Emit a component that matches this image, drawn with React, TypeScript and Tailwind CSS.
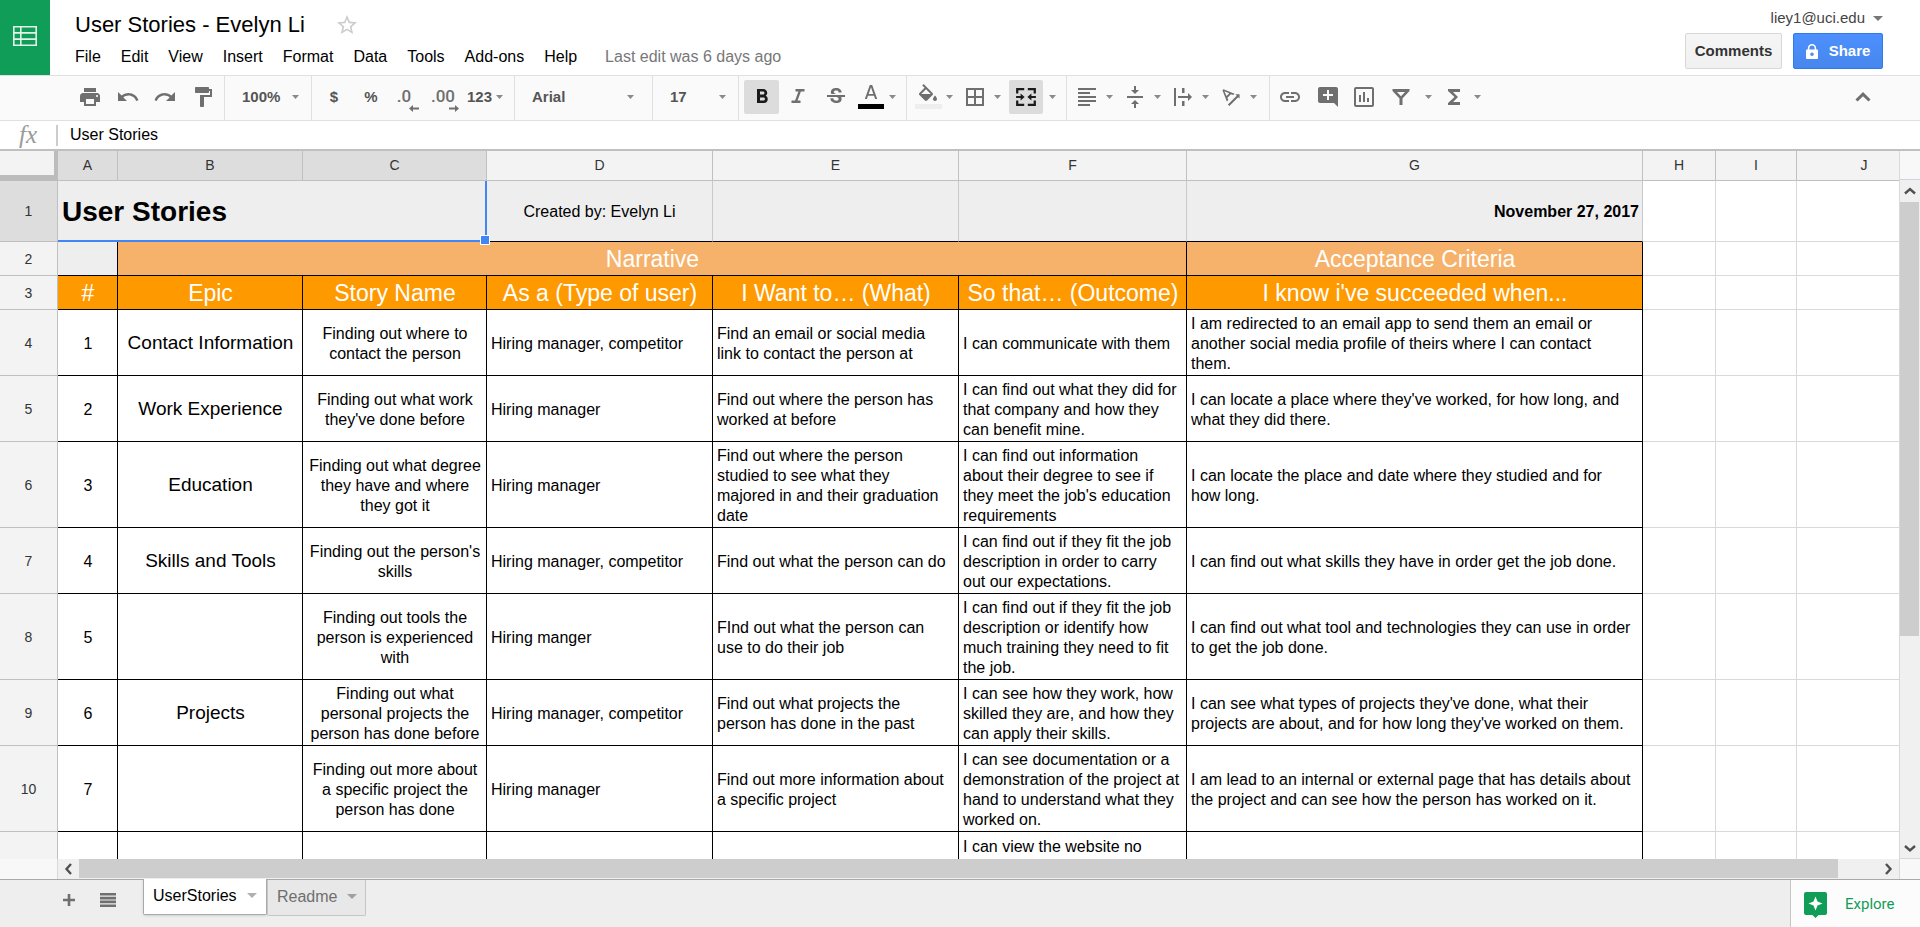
import { ReactNode } from 'react';

type Cell = { t?: string; span?: number; c?: string };
type Row = { n: string; h: string; cells: Cell[] };

const COLS: { id: string; w: string; on?: boolean }[] = [
  { id: 'A', w: 'w-[60px]', on: true },
  { id: 'B', w: 'w-[185px]', on: true },
  { id: 'C', w: 'w-[184px]', on: true },
  { id: 'D', w: 'w-[226px]' },
  { id: 'E', w: 'w-[246px]' },
  { id: 'F', w: 'w-[228px]' },
  { id: 'G', w: 'w-[456px]' },
  { id: 'H', w: 'w-[73px]' },
  { id: 'I', w: 'w-[81px]' },
  { id: 'J', w: 'w-[135px]' },
];

const EMPTY = 'border-[#d9d9d9]';
const HEAD = 'border-black bg-[#ff9900] text-white text-[23px] text-center';
const BAND = 'border-black bg-[#f6b26b] text-white text-[23px] text-center';
const GRAY = 'bg-[#eeeeee] border-r-[#c9c9c9] border-b-black';
const MID = 'border-black pt-0.5 text-center';
const EPIC = 'border-black text-center text-[19px]';
const LEFT = 'border-black pt-0.5 text-left';

const blank = (): Cell[] => [{ c: EMPTY }, { c: EMPTY }, { c: EMPTY }];

function story(n: string, h: string, v: string[]): Row {
  const styles = [MID, EPIC, MID, LEFT, LEFT, LEFT, LEFT];
  return { n, h, cells: [...v.map((t, i) => ({ t, c: styles[i] })), ...blank()] };
}

const ROWS: Row[] = [
  {
    n: '2',
    h: 'h-[34px]',
    cells: [
      { c: 'bg-[#eeeeee] border-black' },
      { t: 'Narrative', span: 5, c: BAND },
      { t: 'Acceptance Criteria', c: BAND },
      ...blank(),
    ],
  },
  {
    n: '3',
    h: 'h-[34px]',
    cells: [
      ...['#', 'Epic', 'Story Name', 'As a (Type of user)', 'I Want to… (What)', 'So that… (Outcome)', "I know i've succeeded when..."].map(
        (t) => ({ t, c: HEAD }),
      ),
      ...blank(),
    ],
  },
  story('4', 'h-[66px]', [
    '1',
    'Contact Information',
    'Finding out where to\ncontact the person',
    'Hiring manager, competitor',
    'Find an email or social media\nlink to contact the person at',
    'I can communicate with them',
    'I am redirected to an email app to send them an email or\nanother social media profile of theirs where I can contact\nthem.',
  ]),
  story('5', 'h-[66px]', [
    '2',
    'Work Experience',
    "Finding out what work\nthey've done before",
    'Hiring manager',
    'Find out where the person has\nworked at before',
    'I can find out what they did for\nthat company and how they\ncan benefit mine.',
    "I can locate a place where they've worked, for how long, and\nwhat they did there.",
  ]),
  story('6', 'h-[86px]', [
    '3',
    'Education',
    'Finding out what degree\nthey have and where\nthey got it',
    'Hiring manager',
    'Find out where the person\nstudied to see what they\nmajored in and their graduation\ndate',
    "I can find out information\nabout their degree to see if\nthey meet the job's education\nrequirements",
    'I can locate the place and date where they studied and for\nhow long.',
  ]),
  story('7', 'h-[66px]', [
    '4',
    'Skills and Tools',
    "Finding out the person's\nskills",
    'Hiring manager, competitor',
    'Find out what the person can do',
    'I can find out if they fit the job\ndescription in order to carry\nout our expectations.',
    'I can find out what skills they have in order get the job done.',
  ]),
  story('8', 'h-[86px]', [
    '5',
    '',
    'Finding out tools the\nperson is experienced\nwith',
    'Hiring manger',
    'FInd out what the person can\nuse to do their job',
    'I can find out if they fit the job\ndescription or identify how\nmuch training they need to fit\nthe job.',
    'I can find out what tool and technologies they can use in order\nto get the job done.',
  ]),
  story('9', 'h-[66px]', [
    '6',
    'Projects',
    'Finding out what\npersonal projects the\nperson has done before',
    'Hiring manager, competitor',
    'Find out what projects the\nperson has done in the past',
    'I can see how they work, how\nskilled they are, and how they\ncan apply their skills.',
    "I can see what types of projects they've done, what their\nprojects are about, and for how long they've worked on them.",
  ]),
  story('10', 'h-[86px]', [
    '7',
    '',
    'Finding out more about\na specific project the\nperson has done',
    'Hiring manager',
    'Find out more information about\na specific project',
    'I can see documentation or a\ndemonstration of the project at\nhand to understand what they\nworked on.',
    'I am lead to an internal or external page that has details about\nthe project and can see how the person has worked on it.',
  ]),
  story('', 'h-7', ['', '', '', '', '', 'I can view the website no', '']),
];

const Caret = ({ c = 'fill-[#8a8a8a]' }: { c?: string }) => (
  <svg viewBox="0 0 7 4" className={`h-1 w-[7px] shrink-0 ${c}`}>
    <path d="M0 0h7L3.5 4z" />
  </svg>
);

const Icon = ({ children }: { children: ReactNode }) => (
  <svg viewBox="0 0 24 24" className="h-6 w-6 shrink-0 fill-current">
    {children}
  </svg>
);

function Tool({ label, w, children, on }: { label: string; w: string; children: ReactNode; on?: boolean }) {
  return (
    <button
      aria-label={label}
      className={`flex h-[34px] shrink-0 items-center justify-center rounded-xs ${w} ${on ? 'bg-[#dcdcdc] text-[#1a1a1a]' : 'text-[#6f6f6f]'}`}
    >
      {children}
    </button>
  );
}

const Drop = ({ label, w }: { label: string; w: string }) => (
  <button aria-label={label} className={`flex h-[34px] shrink-0 items-center justify-center ${w}`}>
    <Caret />
  </button>
);

const Rule = () => <div className="-mb-0.5 w-px shrink-0 self-stretch bg-[#e0e0e0]" />;

const Chevron = ({ d }: { d: string }) => (
  <svg viewBox="0 0 12 12" className="h-3 w-3 fill-none stroke-[#505050] stroke-[2.4]">
    <path d={d} />
  </svg>
);

export default function App() {
  return (
    <div className="flex h-screen flex-col overflow-hidden bg-white font-['Liberation_Sans',Arial,sans-serif] text-black">
      <header className="flex h-[75px] shrink-0">
        <a href="#home" aria-label="Sheets home" className="flex w-[50px] items-center justify-center bg-[#0f9d58] pb-1">
          <svg viewBox="0 0 24 20" className="h-5 w-6 fill-none stroke-[#e3f3ea] stroke-[1.6]">
            <path d="M.8.8h22.4v18.4H.8zM.8 6.9h22.4M.8 13.1h22.4M7.8.8v18.4" />
          </svg>
        </a>
        <div className="flex flex-1 flex-col pl-[25px]">
          <div className="flex h-[42px] items-center gap-[30px] pt-2">
            <h1 className="text-[22px] leading-7">User Stories - Evelyn Li</h1>
            <button aria-label="Star">
              <svg viewBox="0 0 24 24" className="h-6 w-6 fill-[#cccccc]">
                <path d="M22 9.24l-7.19-.62L12 2 9.19 8.63 2 9.24l5.46 4.73L5.82 21 12 17.27 18.18 21l-1.63-7.03L22 9.24zM12 15.4l-3.76 2.27 1-4.28-3.32-2.88 4.38-.38L12 6.1l1.71 4.04 4.38.38-3.32 2.88 1 4.28L12 15.4z" />
              </svg>
            </button>
          </div>
          <nav className="flex h-[30px] items-center gap-5 text-[16px]">
            {['File', 'Edit', 'View', 'Insert', 'Format', 'Data', 'Tools', 'Add-ons', 'Help'].map((m) => (
              <button key={m}>{m}</button>
            ))}
            <a href="#history" className="pl-2 text-[#777777]">
              Last edit was 6 days ago
            </a>
          </nav>
        </div>
        <div className="flex flex-col items-end pr-[37px]">
          <button className="flex h-[33px] items-center gap-2 pt-1 text-[15px] text-[#444444]">
            liey1@uci.edu
            <svg viewBox="0 0 10 5" className="h-[5px] w-[10px] fill-[#777777]">
              <path d="M0 0h10L5 5z" />
            </svg>
          </button>
          <div className="flex gap-[11px] text-[15px] font-bold">
            <button className="h-9 w-[97px] rounded-xs border border-[#d8d8d8] bg-linear-to-b from-[#f5f5f5] to-[#f1f1f1] text-[#333333]">
              Comments
            </button>
            <button className="flex h-9 w-[90px] items-center justify-center gap-[11px] rounded-xs border border-[#3079ed] bg-linear-to-b from-[#4d90fe] to-[#4787ed] text-white">
              <svg viewBox="0 0 12 15" className="h-[15px] w-3">
                <path className="fill-none stroke-white stroke-[1.6]" d="M2.6 7V4.2a3.4 3.4 0 0 1 6.8 0V7" />
                <path className="fill-white" fillRule="evenodd" d="M1 5.600h10a1 1 0 0 1 1 1V14a1 1 0 0 1-1 1H1a1 1 0 0 1-1-1V6.600a1 1 0 0 1 1-1zm5 2.900a1.800 1.800 0 1 0 0 3.600 1.800 1.800 0 0 0 0-3.600z" />
              </svg>
              Share
            </button>
          </div>
        </div>
      </header>

      <div role="toolbar" className="flex h-[46px] shrink-0 items-center border-y border-[#e0e0e0] bg-[#fafafa] pb-0.5 pl-[71px] text-[15px] font-bold text-[#555555]">
        <Tool label="Print" w="w-[38px]">
          <Icon>
            <path d="M19 8H5c-1.660 0-3 1.340-3 3v6h4v4h12v-4h4v-6c0-1.660-1.340-3-3-3zm-3 11H8v-5h8v5zm3-7c-.55 0-1-.45-1-1s.45-1 1-1 1 .45 1 1-.45 1-1 1zm-1-9H6v4h12V3z" />
          </Icon>
        </Tool>
        <Tool label="Undo" w="w-[37px]">
          <Icon>
            <path d="M12.500 8c-2.650 0-5.050.99-6.900 2.600L2 7v9h9l-3.620-3.620c1.390-1.160 3.160-1.880 5.120-1.880 3.540 0 6.550 2.310 7.600 5.500l2.370-.78C21.080 11.030 17.150 8 12.500 8z" />
          </Icon>
        </Tool>
        <Tool label="Redo" w="w-[38px]">
          <Icon>
            <path d="M18.400 10.600C16.550 8.990 14.150 8 11.500 8c-4.650 0-8.580 3.030-9.960 7.220L3.900 16c1.050-3.190 4.050-5.500 7.600-5.500 1.950 0 3.730.72 5.120 1.880L13 16h9V7l-3.600 3.600z" />
          </Icon>
        </Tool>
        <Tool label="Paint format" w="w-[37px]">
          <Icon>
            <path d="M18 4V3c0-.55-.45-1-1-1H5c-.55 0-1 .45-1 1v4c0 .55.45 1 1 1h12c.55 0 1-.45 1-1V6h1v4H9v11c0 .55.45 1 1 1h2c.55 0 1-.45 1-1v-9h8V4h-3z" />
          </Icon>
        </Tool>
        <div className="w-[3px]" />
        <Rule />
        <button className="flex h-[34px] w-[86px] items-center justify-between pr-3 pl-[17px]">
          100% <Caret />
        </button>
        <Rule />
        <Tool label="Currency" w="w-[44px]"><span className="text-[#555555]">$</span></Tool>
        <Tool label="Percent" w="w-[30px]"><span className="text-[#555555]">%</span></Tool>
        <Tool label="Decrease decimals" w="w-[36px]">
          <span className="relative font-['Roboto',sans-serif] text-[17px] font-medium">
            .0
            <svg viewBox="0 0 10 7" className="absolute -right-2 -bottom-0.5 h-[7px] w-[10px] fill-current">
              <path d="M4 0v2.500h6v2H4V7L0 3.500z" />
            </svg>
          </span>
        </Tool>
        <Tool label="Increase decimals" w="w-[42px]">
          <span className="relative font-['Roboto',sans-serif] text-[17px] font-medium">
            .00
            <svg viewBox="0 0 10 7" className="absolute -right-1 -bottom-0.5 h-[7px] w-[10px] fill-current">
              <path d="M6 0v2.500H0v2h6V7l4-3.500z" />
            </svg>
          </span>
        </Tool>
        <button className="flex h-[34px] w-[50px] items-center gap-1 pl-[3px]">
          123 <Caret />
        </button>
        <Rule />
        <button className="flex h-[34px] w-[137px] items-center justify-between pr-[18px] pl-[17px]">
          Arial <Caret />
        </button>
        <Rule />
        <button className="flex h-[34px] w-[85px] items-center justify-between pr-3 pl-[17px]">
          17 <Caret />
        </button>
        <Rule />
        <div className="w-[5px]" />
        <Tool label="Bold" w="w-[35px]" on>
          <Icon>
            <path d="M15.600 10.790c.97-.67 1.650-1.770 1.650-2.790 0-2.260-1.750-4-4-4H7v14h7.040c2.090 0 3.710-1.700 3.710-3.790 0-1.520-.86-2.820-2.150-3.420zM10 6.500h3c.83 0 1.500.67 1.500 1.500s-.67 1.500-1.500 1.500h-3v-3zm3.500 9H10v-3h3.500c.83 0 1.500.67 1.500 1.500s-.67 1.500-1.500 1.500z" />
          </Icon>
        </Tool>
        <Tool label="Italic" w="w-[38px]">
          <Icon>
            <path d="M9.500 4v2.500h2.900l-3.300 9H5.500V18h9v-2.500h-2.900l3.300-9h3.600V4z" />
          </Icon>
        </Tool>
        <Tool label="Strikethrough" w="w-[37px]">
          <Icon>
            <path d="M7.240 8.750c-.26-.48-.39-1.030-.39-1.670 0-.61.130-1.160.4-1.670.26-.5.630-.93 1.110-1.290.48-.35 1.050-.63 1.700-.83.66-.19 1.390-.29 2.180-.29.810 0 1.540.110 2.210.340.660.220 1.230.540 1.690.940.470.4.830.880 1.080 1.430.250.550.380 1.150.380 1.810h-3.010c0-.31-.05-.59-.15-.85-.09-.27-.24-.49-.44-.68-.2-.19-.45-.33-.75-.44-.3-.1-.66-.16-1.060-.16-.39 0-.74.040-1.030.130-.29.090-.53.210-.72.360-.19.160-.34.340-.44.550-.1.210-.15.430-.15.660 0 .480.250.880.740 1.210.380.250.770.480 1.410.700H7.390c-.05-.080-.110-.170-.150-.250zM21 12v-2H3v2h9.620c.180.070.4.140.55.200.370.170.660.340.870.510.210.170.350.360.430.570.070.200.110.430.110.690 0 .230-.05.450-.14.660-.09.200-.23.380-.42.530-.19.150-.42.260-.71.350-.29.080-.63.130-1.010.130-.43 0-.83-.04-1.180-.13s-.66-.23-.91-.42c-.25-.19-.45-.44-.59-.75-.14-.31-.25-.76-.25-1.210H6.400c0 .550.080 1.130.240 1.580.160.450.370.850.650 1.210.280.350.6.660.980.920.370.260.780.480 1.220.650.440.170.9.300 1.380.390.480.080.960.130 1.440.130.8 0 1.530-.09 2.180-.28s1.210-.45 1.670-.79c.46-.34.820-.77 1.070-1.270s.38-1.070.38-1.710c0-.6-.1-1.140-.31-1.610-.05-.110-.110-.230-.170-.330H21z" />
          </Icon>
        </Tool>
        <Tool label="Text color" w="w-[34px]">
          <svg viewBox="0 0 26 28" className="h-7 w-[26px] fill-current">
            <path d="M11.800 2L6.800 16h2.100l1.100-3.200h6l1.100 3.200h2.100L14.200 2zm-1.100 9L13 4.300l2.300 6.700z" />
            <path className="fill-black" d="M0 21h26v5H0z" />
          </svg>
        </Tool>
        <Drop label="Text color options" w="w-2" />
        <div className="w-[10px]" />
        <Rule />
        <div className="w-[3px]" />
        <Tool label="Fill color" w="w-9">
          <svg viewBox="0 0 27 28" className="h-7 w-[27px] fill-current">
            <path d="M17.560 9.940L8.620 1 7.210 2.410l2.380 2.380-5.150 5.150c-.59.590-.590 1.540 0 2.120l5.500 5.500c.290.290.680.440 1.060.440s.770-.150 1.060-.440l5.500-5.500c.59-.580.59-1.530 0-2.120zM6.210 11L11 6.210 15.790 11zM20 12.500s-2 2.170-2 3.500c0 1.100.9 2 2 2s2-.9 2-2c0-1.330-2-3.500-2-3.500z" />
            <path className="fill-[#eeeeee]" d="M0 21h27v5H0z" />
          </svg>
        </Tool>
        <Drop label="Fill color options" w="w-[7px]" />
        <div className="w-[3px]" />
        <Tool label="Borders" w="w-[38px]">
          <Icon>
            <path fillRule="evenodd" d="M3 3h18v18H3zm2 2v6h6V5zm8 0v6h6V5zm-8 8v6h6v-6zm8 0v6h6v-6z" />
          </Icon>
        </Tool>
        <Drop label="Border options" w="w-[7px]" />
        <div className="w-2" />
        <Tool label="Merge cells" w="w-[34px]" on>
          <svg viewBox="0 0 22 20" className="h-[18px] w-5 fill-current">
            <path d="M0 0h9v2.500H2.500V6H0zM13 0h9v6h-2.500V2.500H13zM0 14h2.500v3.500H9V20H0zM19.500 14H22v6h-9v-2.500h6.500zM0 8.800h5V6l4.500 4L5 14v-2.800H0zM22 8.800h-5V6l-4.500 4 4.500 4v-2.800h5z" />
          </svg>
        </Tool>
        <Drop label="Merge options" w="w-[18px]" />
        <div className="w-[5px]" />
        <Rule />
        <div className="flex items-center gap-1 pl-[3px]">
          <div className="flex">
            <Tool label="Horizontal align" w="w-[34px]">
              <Icon>
                <path d="M3 3h18v2H3zM3 7h12v2H3zM3 11h18v2H3zM3 15h18v2H3zM3 19h12v2H3z" />
              </Icon>
            </Tool>
            <Drop label="Horizontal align options" w="w-[10px]" />
          </div>
          <div className="flex">
            <Tool label="Vertical align" w="w-[34px]">
              <Icon>
                <path d="M8 19h3v4h2v-4h3l-4-4-4 4zm8-14h-3V1h-2v4H8l4 4 4-4zM4 11v2h16v-2H4z" />
              </Icon>
            </Tool>
            <Drop label="Vertical align options" w="w-[10px]" />
          </div>
          <div className="flex">
            <Tool label="Text wrapping" w="w-[34px]">
              <Icon>
                <path d="M3 3h2v18H3zM11 3h2.500v5H11zM11 16h2.500v5H11zM7 11h10V8l4 4-4 4v-3H7z" />
              </Icon>
            </Tool>
            <Drop label="Text wrapping options" w="w-[10px]" />
          </div>
          <div className="flex">
            <Tool label="Text rotation" w="w-[34px]">
              <Icon>
                <path d="M4.490 4.210L3.430 5.270 7.850 16.400l1.480-1.480-.92-2.190 3.540-3.540 2.190.92 1.480-1.480L4.490 4.210zm3.090 6.800L5.360 6.140l4.870 2.230-2.650 2.640zm12.990-1.680h-4.240l1.410 1.410-8.840 8.840L10.320 21l8.840-8.840 1.410 1.410V9.330z" />
              </Icon>
            </Tool>
            <Drop label="Text rotation options" w="w-[10px]" />
          </div>
        </div>
        <div className="w-[11px]" />
        <Rule />
        <div className="w-0.5" />
        <Tool label="Insert link" w="w-9">
          <Icon>
            <path d="M3.900 12c0-1.710 1.390-3.100 3.100-3.100h4V7H7c-2.760 0-5 2.240-5 5s2.240 5 5 5h4v-1.900H7c-1.710 0-3.100-1.390-3.100-3.100zM8 13h8v-2H8v2zm9-6h-4v1.900h4c1.710 0 3.100 1.390 3.100 3.100s-1.390 3.100-3.100 3.100h-4V17h4c2.760 0 5-2.240 5-5s-2.240-5-5-5z" />
          </Icon>
        </Tool>
        <Tool label="Insert comment" w="w-10">
          <Icon>
            <path d="M21.990 4c0-1.100-.89-2-1.990-2H4c-1.100 0-2 .9-2 2v12c0 1.100.9 2 2 2h14l4 4-.01-18zM17 11h-4v4h-2v-4H7V9h4V5h2v4h4v2z" />
          </Icon>
        </Tool>
        <Tool label="Insert chart" w="w-8">
          <Icon>
            <path fillRule="evenodd" d="M4 2h16a2 2 0 0 1 2 2v16a2 2 0 0 1-2 2H4a2 2 0 0 1-2-2V4a2 2 0 0 1 2-2zm0 2v16h16V4zM7 10h2v7H7zM11 7h2v10h-2zM15 13h2v4h-2z" />
          </Icon>
        </Tool>
        <Tool label="Filter" w="w-[42px]">
          <Icon>
            <path fillRule="evenodd" d="M3.500 4h17v2l-7 7.500V20h-3v-6.500l-7-7.500zm4.500 3l4 4.300L16 7z" />
          </Icon>
        </Tool>
        <Drop label="Filter options" w="w-3" />
        <Tool label="Functions" w="w-[40px]">
          <Icon>
            <path d="M18 4H6v2l6.500 6L6 18v2h12v-3h-7l5-5-5-5h7z" />
          </Icon>
        </Tool>
        <Drop label="Function options" w="w-[7px]" />
        <button aria-label="Hide the menus" className="mr-[49px] ml-auto text-[#6f6f6f]">
          <svg viewBox="0 0 16 10" className="h-[10px] w-4 fill-none stroke-current stroke-3">
            <path d="M1.500 8.500L8 2.200l6.500 6.300" />
          </svg>
        </button>
      </div>

      <div className="flex h-7 shrink-0 items-center">
        <span className="w-[56px] text-center font-['Liberation_Serif',serif] text-[25px] leading-7 text-[#9a9a9a] italic">fx</span>
        <span className="h-[21px] w-[2px] bg-[#cccccc]" />
        <input aria-label="Formula" defaultValue="User Stories" className="h-6 flex-1 pl-3 text-[16px] outline-none" />
      </div>

      <div className="flex min-h-0 flex-1 border-t-2 border-[#c0c0c0]">
        <div className="flex min-w-0 flex-1 flex-col">
          <div className="min-h-0 flex-1 overflow-hidden">
            <table className="w-[1932px] table-fixed border-separate border-spacing-0 text-[16px] leading-5">
              <colgroup>
                <col className="w-[58px]" />
                {COLS.map((c) => (
                  <col key={c.id} className={c.w} />
                ))}
              </colgroup>
              <thead>
                <tr className="h-[30px] text-[14px] text-[#333333]">
                  <td className="border-r-4 border-b-[6px] border-[#bcbcbc] bg-[#f3f3f3] p-0" />
                  {COLS.map((c) => (
                    <th key={c.id} className={`border-r border-b border-[#c0c0c0] p-0 pb-0.5 font-normal ${c.on ? 'bg-[#dddddd]' : 'bg-[#f3f3f3]'}`}>
                      {c.id}
                    </th>
                  ))}
                </tr>
              </thead>
              <tbody>
                <tr className="h-[61px]">
                  <th className="border-r border-b border-[#c0c0c0] bg-[#dddddd] p-0 text-[14px] font-normal text-[#333333]">1</th>
                  <td colSpan={3} className="relative border-r-2 border-b-2 border-[#4285f4] bg-[#eeeeee] p-0 pt-0.5 pl-1 text-[28px] font-bold">
                    User Stories
                    <span className="absolute -right-1 -bottom-1 h-2 w-2 bg-[#4285f4] outline outline-white" />
                  </td>
                  <td className={`border-r border-b p-0 pt-0.5 text-center ${GRAY}`}>Created by: Evelyn Li</td>
                  <td className={`border-r border-b p-0 ${GRAY}`} />
                  <td className={`border-r border-b p-0 ${GRAY}`} />
                  <td className={`border-r border-b p-0 pt-0.5 pr-[3px] text-right font-bold ${GRAY}`}>November 27, 2017</td>
                  <td className={`border-r border-b p-0 ${EMPTY}`} />
                  <td className={`border-r border-b p-0 ${EMPTY}`} />
                  <td className={`border-r border-b p-0 ${EMPTY}`} />
                </tr>
                {ROWS.map((r) => (
                  <tr key={r.n} className={r.h}>
                    <th className="border-r border-b border-[#c0c0c0] bg-[#f3f3f3] p-0 text-[14px] font-normal text-[#333333]">{r.n}</th>
                    {r.cells.map((c, i) => (
                      <td key={i} colSpan={c.span} className={`border-r border-b pr-[3px] pl-1 align-middle whitespace-pre ${c.c}`}>
                        {c.t}
                      </td>
                    ))}
                  </tr>
                ))}
              </tbody>
            </table>
          </div>
          <div className="flex h-5 shrink-0 bg-[#f0f0f0]">
            <div className="w-[58px] border-r border-[#d9d9d9] bg-[#f8f8f8]" />
            <button aria-label="Scroll left" className="flex w-[21px] items-center justify-center">
              <Chevron d="M8 1L3.500 6 8 11" />
            </button>
            <div className="mb-px w-[1759px] shrink bg-[#cdcdcd]" />
            <div className="flex flex-1 items-center justify-end pr-[5px]">
              <Chevron d="M4 1l4.500 5L4 11" />
            </div>
          </div>
        </div>
        <div className="flex w-[21px] flex-col border-l border-[#d9d9d9] bg-[#f0f0f0]">
          <div className="h-[29px] border-b border-[#d0d5dd] bg-[#f8f8f8]" />
          <button aria-label="Scroll up" className="flex h-[22px] items-center justify-center">
            <Chevron d="M1 8.500L6 4l5 4.500" />
          </button>
          <div className="mr-px h-[434px] bg-[#cdcdcd]" />
          <div className="flex flex-1 items-end justify-center pb-1">
            <Chevron d="M1 4l5 4.500L11 4" />
          </div>
          <div className="h-[21px] border-t border-[#d9d9d9] bg-[#f8f8f8]" />
        </div>
      </div>

      <footer className="flex h-12 shrink-0 border-t border-[#a9a9a9] bg-[#eeeeee] text-[16px]">
        <button aria-label="Add sheet" className="ml-[63px] flex h-10 w-3 items-center text-[#6f6f6f]">
          <svg viewBox="0 0 12 12" className="h-3 w-3 fill-current">
            <path d="M4.700 0h2.600v4.700H12v2.600H7.300V12H4.700V7.300H0V4.700h4.700z" />
          </svg>
        </button>
        <button aria-label="All sheets" className="ml-[25px] flex h-10 w-4 items-center text-[#6f6f6f]">
          <svg viewBox="0 0 16 14" className="h-[14px] w-4 fill-current">
            <path d="M0 0h16v2.600H0zM0 3.800h16v2.600H0zM0 7.600h16v2.600H0zM0 11.400h16V14H0z" />
          </svg>
        </button>
        <button className="-mt-px ml-[27px] flex h-9 w-[124px] items-center justify-between rounded-b-xs border border-t-0 border-[#a9a9a9] bg-white pr-[9px] pb-0.5 pl-[9px] shadow-sm">
          UserStories
          <svg viewBox="0 0 10 5" className="h-[5px] w-[10px] fill-[#b0b0b0]"><path d="M0 0h10L5 5z" /></svg>
        </button>
        <button className="flex h-9 w-[99px] items-center justify-between rounded-b-xs border border-t-0 border-[#c6c6c6] bg-[#e8e8e8] pr-2 pb-0.5 pl-[9px] text-[#6f6f6f]">
          Readme
          <svg viewBox="0 0 10 5" className="h-[5px] w-[10px] fill-[#a0a0a0]"><path d="M0 0h10L5 5z" /></svg>
        </button>
        <button className="ml-auto flex w-[130px] items-center gap-[18px] border-l border-[#c6c6c6] bg-[#fcfcfc] pt-0.5 pl-[13px] font-['Roboto',sans-serif] text-[15px] text-[#0f9d58]">
          <svg viewBox="0 0 23 26" className="h-[26px] w-[23px]">
            <path className="fill-[#0f9d58]" d="M2 0h19a2 2 0 0 1 2 2v19a2 2 0 0 1-2 2h-6.500L11.500 26l-3-3H2a2 2 0 0 1-2-2V2a2 2 0 0 1 2-2z" />
            <path className="fill-white" d="M11.500 4.500L13.500 9.500l5 2-5 2-2 5-2-5-5-2 5-2z" />
          </svg>
          Explore
        </button>
      </footer>
    </div>
  );
}
